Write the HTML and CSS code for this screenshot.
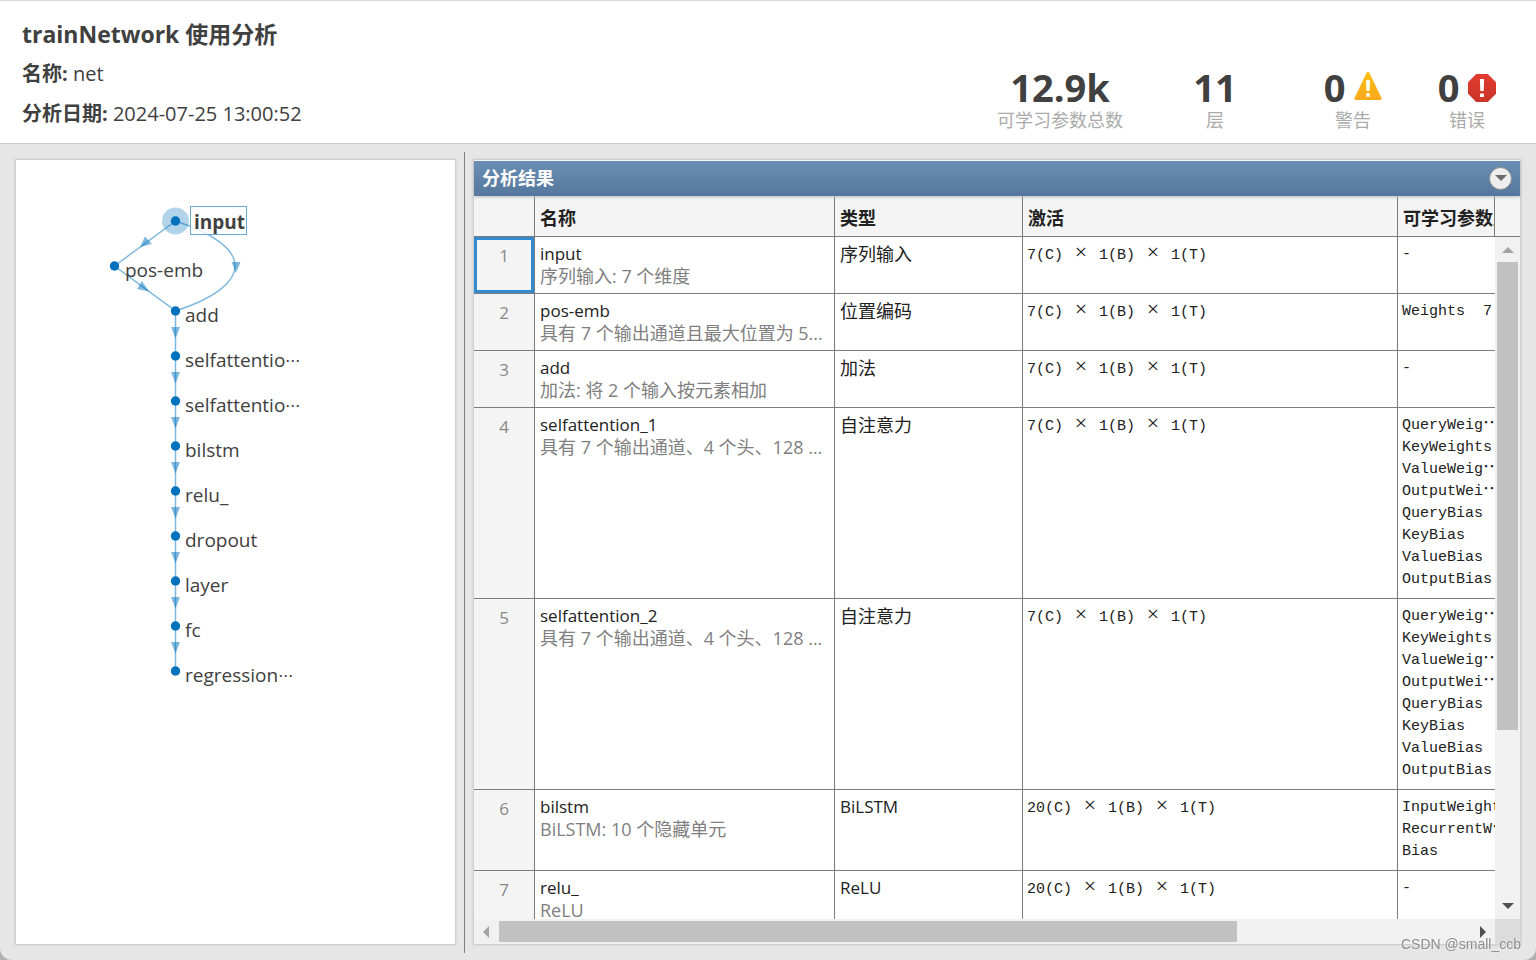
FILE: index.html
```html
<!DOCTYPE html>
<html lang="zh-CN">
<head>
    <meta charset="UTF-8">
    <meta name="viewport" content="width=device-width, initial-scale=1.0">
    <title>trainNetwork 使用分析</title>
    <link rel="stylesheet" href="styles.css">
</head>
<body>
    <header class="summary">
        <div class="info">
            <h1>trainNetwork 使用分析</h1>
            <p><strong>名称:</strong> net</p>
            <p><strong>分析日期:</strong> 2024-07-25 13:00:52</p>
        </div>
        <div class="stats">
            <div class="stat">
                <div class="stat-value">12.9k</div>
                <div class="stat-label">可学习参数总数</div>
            </div>
            <div class="stat">
                <div class="stat-value">11</div>
                <div class="stat-label">层</div>
            </div>
            <div class="stat">
                <div class="stat-value">0
                    <svg width="28" height="30" viewBox="0 0 28 30">
                        <defs>
                            <linearGradient id="warn" x1="0" y1="0" x2="0" y2="1">
                                <stop offset="0" stop-color="#fdc010"/>
                                <stop offset="1" stop-color="#fba71d"/>
                            </linearGradient>
                        </defs>
                        <path d="M12.6 .8Q14 -1 15.4 .8L27.600 26.200Q28 28 26.400 28H1.600Q0 28 .4 26.200Z" fill="url(#warn)"/>
                        <path d="M12 8h4l-.4 11h-3.200zM12.200 21.300h3.600v3.400h-3.600z" fill="#fff"/>
                    </svg>
                </div>
                <div class="stat-label">警告</div>
            </div>
            <div class="stat">
                <div class="stat-value">0
                    <svg width="28" height="30" viewBox="0 0 28 30">
                        <defs>
                            <linearGradient id="err" x1="0" y1="0" x2="0" y2="1">
                                <stop offset="0" stop-color="#e23b2e"/>
                                <stop offset="1" stop-color="#c93529"/>
                            </linearGradient>
                        </defs>
                        <path d="M8.200 2h11.600L28 10.200v11.600L19.800 30H8.200L0 21.800V10.200Z" fill="url(#err)"/>
                        <path d="M11.900 7h4.200l-.4 12h-3.400zM12.100 21.500h3.800v3.600h-3.800z" fill="#fff"/>
                    </svg>
                </div>
                <div class="stat-label">错误</div>
            </div>
        </div>
    </header>

    <main class="workspace">
        <section class="panel graph">
            <svg width="439" height="784" viewBox="16 160 439 784">
                <!-- Edges -->
                <g class="edges">
                    <path d="M175.500 221L114.500 266L175.500 311V671"/>
                    <path d="M175.500 221C255 247 255 285 175.500 311"/>
                </g>
                <circle class="halo" cx="175.500" cy="221" r="13.500"/>
                <rect class="label-box" x="190.500" y="206.500" width="56" height="28"/>
                <!-- Arrow heads -->
                <g class="arrows">
                    <path d="M140 247L145 236.500L152 244Z"/>
                    <path d="M149 291.500L137 289L142 281Z"/>
                    <path d="M231.500 262H240.500L236 273Z"/>
                    <path d="M171 327H180L175.500 338.500Z"/>
                    <path d="M171 372H180L175.500 383.500Z"/>
                    <path d="M171 417H180L175.500 428.500Z"/>
                    <path d="M171 462H180L175.500 473.500Z"/>
                    <path d="M171 507H180L175.500 518.500Z"/>
                    <path d="M171 552H180L175.500 563.500Z"/>
                    <path d="M171 597H180L175.500 608.500Z"/>
                    <path d="M171 642H180L175.500 653.500Z"/>
                </g>
                <!-- Nodes -->
                <g class="nodes">
                    <circle cx="175.500" cy="221" r="4.700"/>
                    <circle cx="114.500" cy="266" r="4.700"/>
                    <circle cx="175.500" cy="311" r="4.700"/>
                    <circle cx="175.500" cy="356" r="4.700"/>
                    <circle cx="175.500" cy="401" r="4.700"/>
                    <circle cx="175.500" cy="446" r="4.700"/>
                    <circle cx="175.500" cy="491" r="4.700"/>
                    <circle cx="175.500" cy="536" r="4.700"/>
                    <circle cx="175.500" cy="581" r="4.700"/>
                    <circle cx="175.500" cy="626" r="4.700"/>
                    <circle cx="175.500" cy="671" r="4.700"/>
                </g>
                <g class="labels">
                    <text class="selected" x="194" y="229">input</text>
                    <text x="125" y="277">pos-emb</text>
                    <text x="185" y="322">add</text>
                    <text x="185" y="367">selfattentio<tspan class="dots">…</tspan></text>
                    <text x="185" y="412">selfattentio<tspan class="dots">…</tspan></text>
                    <text x="185" y="457">bilstm</text>
                    <text x="185" y="502">relu_</text>
                    <text x="185" y="547">dropout</text>
                    <text x="185" y="592">layer</text>
                    <text x="185" y="637">fc</text>
                    <text x="185" y="682">regression<tspan class="dots">…</tspan></text>
                </g>
            </svg>
        </section>

        <div class="splitter"></div>

        <section class="panel results">
            <div class="results-title">
                <h2>分析结果</h2>
                <button class="menu-button" aria-label="菜单">
                    <svg width="12" height="6" viewBox="0 0 12 6"><path d="M0 0h12L6 6z" fill="#6b6b6b"/></svg>
                </button>
            </div>
            <div class="grid">
                <div class="grid-view">
                    <table>
                        <colgroup>
                            <col class="col-index">
                            <col class="col-name">
                            <col class="col-type">
                            <col class="col-activation">
                            <col class="col-learnable">
                        </colgroup>
                        <thead>
                            <tr><th></th><th>名称</th><th>类型</th><th>激活</th><th>可学习参数属性</th></tr>
                        </thead>
                        <tbody>
                            <tr>
                                <td class="index current">1</td>
                                <td><span class="name">input</span><span class="desc">序列输入: 7 个维度</span></td>
                                <td>序列输入</td>
                                <td class="mono">7(C) <i>×</i> 1(B) <i>×</i> 1(T)</td>
                                <td class="mono">-</td>
                            </tr>
                            <tr>
                                <td class="index">2</td>
                                <td><span class="name">pos-emb</span><span class="desc">具有 7 个输出通道且最大位置为 5...</span></td>
                                <td>位置编码</td>
                                <td class="mono">7(C) <i>×</i> 1(B) <i>×</i> 1(T)</td>
                                <td class="mono">Weights  7</td>
                            </tr>
                            <tr>
                                <td class="index">3</td>
                                <td><span class="name">add</span><span class="desc">加法: 将 2 个输入按元素相加</span></td>
                                <td>加法</td>
                                <td class="mono">7(C) <i>×</i> 1(B) <i>×</i> 1(T)</td>
                                <td class="mono">-</td>
                            </tr>
                            <tr>
                                <td class="index">4</td>
                                <td><span class="name">selfattention_1</span><span class="desc">具有 7 个输出通道、4 个头、128 ...</span></td>
                                <td>自注意力</td>
                                <td class="mono">7(C) <i>×</i> 1(B) <i>×</i> 1(T)</td>
                                <td class="mono">QueryWeig<span class="dots">…</span><br>KeyWeights<br>ValueWeig<span class="dots">…</span><br>OutputWei<span class="dots">…</span><br>QueryBias<br>KeyBias<br>ValueBias<br>OutputBias</td>
                            </tr>
                            <tr>
                                <td class="index">5</td>
                                <td><span class="name">selfattention_2</span><span class="desc">具有 7 个输出通道、4 个头、128 ...</span></td>
                                <td>自注意力</td>
                                <td class="mono">7(C) <i>×</i> 1(B) <i>×</i> 1(T)</td>
                                <td class="mono">QueryWeig<span class="dots">…</span><br>KeyWeights<br>ValueWeig<span class="dots">…</span><br>OutputWei<span class="dots">…</span><br>QueryBias<br>KeyBias<br>ValueBias<br>OutputBias</td>
                            </tr>
                            <tr>
                                <td class="index">6</td>
                                <td><span class="name">bilstm</span><span class="desc">BiLSTM: 10 个隐藏单元</span></td>
                                <td><span class="name">BiLSTM</span></td>
                                <td class="mono">20(C) <i>×</i> 1(B) <i>×</i> 1(T)</td>
                                <td class="mono">InputWeights<br>RecurrentW<span class="dots">…</span><br>Bias</td>
                            </tr>
                            <tr>
                                <td class="index">7</td>
                                <td><span class="name">relu_</span><span class="desc">ReLU</span></td>
                                <td><span class="name">ReLU</span></td>
                                <td class="mono">20(C) <i>×</i> 1(B) <i>×</i> 1(T)</td>
                                <td class="mono">-</td>
                            </tr>
                        </tbody>
                    </table>
                </div>
                <div class="side">
                    <div class="side-head"></div>
                    <div class="scrollbar vertical">
                        <svg class="arrow" width="12" height="6" viewBox="0 0 12 6"><path d="M0 6h12L6 0z" fill="#a3a3a3"/></svg>
                        <div class="track"><div class="thumb"></div></div>
                        <svg class="arrow" width="12" height="6" viewBox="0 0 12 6"><path d="M0 0h12L6 6z" fill="#505050"/></svg>
                    </div>
                </div>
                <div class="scrollbar horizontal">
                    <svg class="arrow" width="6" height="12" viewBox="0 0 6 12"><path d="M6 0v12L0 6z" fill="#a3a3a3"/></svg>
                    <div class="track"><div class="thumb"></div></div>
                    <svg class="arrow" width="6" height="12" viewBox="0 0 6 12"><path d="M0 0v12l6-6z" fill="#505050"/></svg>
                </div>
                <div class="corner"></div>
            </div>
        </section>
    </main>
    <div class="watermark">CSDN @small_ccb</div>
</body>
</html>
```
FILE: styles.css
```css
* {
    box-sizing: border-box;
}
html {
    background: #b0b0b0;
}
body {
    margin: 0;
    height: 100vh;
    display: flex;
    flex-direction: column;
    overflow: hidden;
    background: #e6e6e6;
    border-radius: 0 0 12px 12px;
    color: #404040;
    font-family: "Open Sans", "Noto Sans CJK SC", sans-serif;
    font-size: 18px;
    line-height: 22px;
}
h1, h2, p {
    margin: 0;
}

/* Header */
.summary {
    height: 144px;
    flex: none;
    display: flex;
    justify-content: space-between;
    background: #fff;
    border-top: 1px solid #d9d9d9;
    border-bottom: 1px solid #cbcbcb;
    padding: 14px 18px 0 22px;
}
.info h1 {
    font-size: 23px;
    line-height: 39px;
}
.info p {
    font-size: 20px;
    line-height: 40px;
}
.stats {
    display: grid;
    grid-template-columns: 160px 150px 126px 102px;
    text-align: center;
    padding-top: 50px;
}
.stat-value {
    display: flex;
    justify-content: center;
    align-items: center;
    gap: 9px;
    font-size: 38px;
    font-weight: bold;
    line-height: 44px;
}
.stat-label {
    color: #aaa;
    line-height: 22px;
}

/* Panels */
.workspace {
    flex: 1;
    min-height: 0;
    display: flex;
    padding: 8px 15px 7px;
}
.panel {
    background: #fff;
    border: 1px solid #cfcfcf;
    box-shadow: 0 0 3px #ccc;
    margin: 7px 0 8px;
}
.graph {
    width: 441px;
    flex: none;
    overflow: hidden;
}
.graph svg {
    display: block;
}
.splitter {
    width: 1px;
    background: #808080;
    margin: 0 8px;
}
.results {
    flex: 1;
    min-width: 0;
    display: flex;
    flex-direction: column;
    padding-top: 1px;
}

/* Graph drawing */
.edges path {
    fill: none;
    stroke: #0072bd;
    stroke-opacity: 0.5;
    stroke-width: 1.5;
}
.halo {
    fill: #0072bd;
    fill-opacity: 0.3;
}
.label-box {
    fill: #fff;
    fill-opacity: 0.8;
    stroke: #66aad7;
}
.arrows path {
    fill: #0072bd;
    fill-opacity: 0.5;
}
.nodes circle {
    fill: #0072bd;
}
.labels text {
    fill: #404040;
    font-size: 19px;
}
.labels .selected {
    font-weight: bold;
}
.dots {
    font-family: "Noto Sans CJK SC", sans-serif;
    font-size: 18px;
    line-height: 0;
}
.labels .dots {
    font-size: 15px;
}

/* Results */
.results-title {
    height: 35px;
    flex: none;
    display: flex;
    align-items: center;
    justify-content: space-between;
    padding: 0 8px 1px;
    background: linear-gradient(#698db3, #56789f);
    color: #fff;
    box-shadow: 0 1px 3px #bbb;
    position: relative;
}
.results-title h2 {
    font-size: 18px;
}
.menu-button {
    width: 23px;
    height: 23px;
    display: flex;
    align-items: center;
    justify-content: center;
    padding: 0;
    border: 1px solid #888;
    border-radius: 50%;
    background: #eee;
}
.grid {
    flex: 1;
    min-height: 0;
    display: grid;
    grid-template-columns: 1fr 25px;
    grid-template-rows: 1fr 25px;
}
.grid-view {
    overflow: hidden;
    min-width: 0;
    min-height: 0;
}
table {
    table-layout: fixed;
    width: 1300px;
    border-collapse: separate;
    border-spacing: 0;
    color: #212121;
}
.col-index { width: 61px; }
.col-name { width: 300px; }
.col-type { width: 188px; }
.col-activation { width: 375px; }
th {
    height: 41px;
    padding: 4px 5px 0;
    background: #f4f4f4;
    border-right: 1px solid #7c7c7c;
    border-bottom: 1px solid #7c7c7c;
    text-align: left;
    white-space: nowrap;
}
td {
    padding: 6px 5px;
    border-right: 1px solid #7c7c7c;
    border-bottom: 1px solid #7c7c7c;
    vertical-align: top;
    white-space: nowrap;
}
td.index {
    padding-top: 8px;
    background: #f4f4f4;
    color: #888;
    font-size: 17px;
    text-align: center;
}
td.current {
    box-shadow: inset 0 0 0 3px #338acd;
}
.name, .desc {
    display: block;
    font-size: 17px;
}
.desc {
    color: #808080;
    font-size: 18px;
}
td.mono {
    padding: 7px 4px;
    font-family: "Liberation Mono", monospace;
    font-size: 15px;
    white-space: pre;
}
.mono i {
    display: inline-block;
    width: 18px;
    font-family: "Liberation Serif", serif;
    font-size: 22px;
    font-style: normal;
    line-height: 15px;
    text-align: center;
}

/* Scrollbars */
.side {
    display: flex;
    flex-direction: column;
    min-height: 0;
}
.side-head {
    height: 41px;
    flex: none;
    background: #f4f4f4;
    border-bottom: 1px solid #7c7c7c;
    border-left: 1px solid #7c7c7c;
    margin-left: -1px;
}
.scrollbar {
    display: flex;
    align-items: center;
    background: #f1f1f1;
}
.vertical {
    flex: 1;
    flex-direction: column;
    padding: 10px 0;
    gap: 9px;
}
.horizontal {
    padding: 0 9px;
    gap: 10px;
}
.track {
    flex: 1;
}
.vertical .thumb {
    width: 21px;
    height: 74%;
    background: #c1c1c1;
}
.horizontal .thumb {
    width: 76%;
    height: 21px;
    background: #c1c1c1;
}
.corner {
    background: #dcdcdc;
}
.watermark {
    position: fixed;
    right: 15px;
    bottom: 6px;
    color: #8c8c8c;
    font-family: "Liberation Sans", sans-serif;
    font-size: 14px;
    line-height: 20px;
    text-shadow: 0 0 2px #fff;
}
```
